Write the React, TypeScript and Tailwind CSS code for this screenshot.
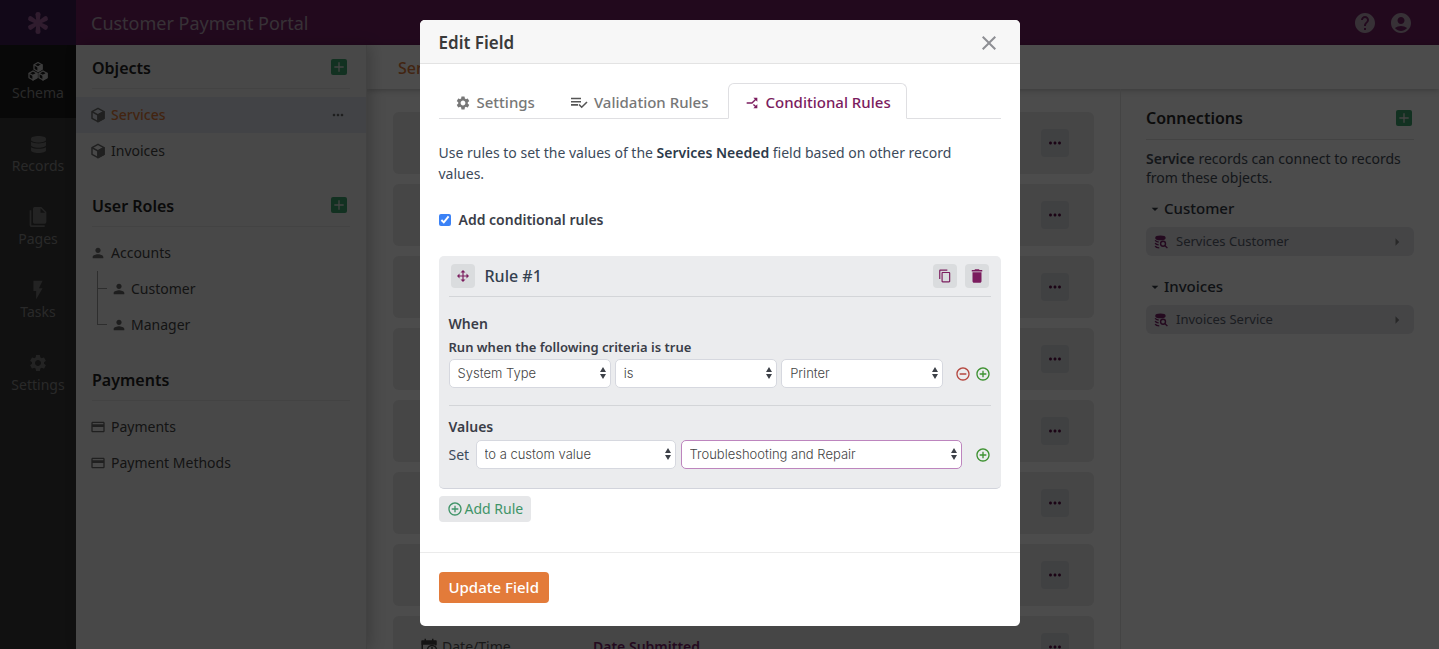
import type { ReactNode } from "react";
import clsx from "clsx";
import { FaDatabase } from "react-icons/fa";
import {
  MdAccountCircle,
  MdAdd,
  MdAddCircleOutline,
  MdArrowDropDown,
  MdArrowRight,
  MdCallSplit,
  MdClose,
  MdContentCopy,
  MdDelete,
  MdFlashOn,
  MdHelp,
  MdMoreHoriz,
  MdOutlineCreditCard,
  MdPerson,
  MdRemoveCircleOutline,
  MdSettings,
} from "react-icons/md";

function LogoIcon() {
  return (
    <svg viewBox="0 0 24 24" className="h-6 w-6" fill="currentColor" aria-hidden="true">
      {["rotate(0 12 12)", "rotate(60 12 12)", "rotate(120 12 12)", "rotate(180 12 12)", "rotate(240 12 12)", "rotate(300 12 12)"].map((t) => (
        <path key={t} transform={t} d="M10.600 13 9.500 3.200Q9.500 1 12 1t2.500 2.200L13.400 13z" />
      ))}
    </svg>
  );
}

function CubeIcon({ className }: { className?: string }) {
  return (
    <svg viewBox="0 0 24 24" className={className} fill="none" stroke="currentColor" strokeWidth="2.2" strokeLinejoin="round" aria-hidden="true">
      <path d="M12 2 21 7v10l-9 5-9-5V7z" />
      <path d="m3 7 9 5 9-5M12 12v10" />
      <path d="m12 12 9-5v10l-9 5z" fill="currentColor" />
    </svg>
  );
}

function CubesIcon() {
  return (
    <svg viewBox="0 0 40 38" className="h-5 w-5" fill="none" stroke="currentColor" strokeWidth="2.6" strokeLinejoin="round" aria-hidden="true">
      {["translate(11 1)", "translate(1 18)", "translate(21 18)"].map((t) => (
        <g key={t} transform={t}>
          <path d="m9 1 8 4.500v9L9 19l-8-4.500v-9z" />
          <path d="m1 5.500 8 4.500 8-4.500" />
          <path d="m9 10 8-4.500v9L9 19z" fill="currentColor" />
        </g>
      ))}
    </svg>
  );
}

function PagesIcon() {
  return (
    <svg viewBox="0 0 24 24" className="h-5 w-5" fill="currentColor" aria-hidden="true">
      <path d="M15,7H20.5L15,1.5V7M8,0H16L22,6V18A2,2 0 0,1 20,20H8C6.89,20 6,19.1 6,18V2A2,2 0 0,1 8,0M4,4V22H20V24H4A2,2 0 0,1 2,22V4H4Z" />
    </svg>
  );
}

function MoveIcon() {
  return (
    <svg viewBox="0 0 24 24" className="h-3.5 w-3.5" fill="currentColor" aria-hidden="true">
      <path d="M13,6V11H18V7.75L22.25,12L18,16.25V13H13V18H16.25L12,22.25L7.75,18H11V13H6V16.25L1.75,12L6,7.75V11H11V6H7.75L12,1.75L16.25,6H13Z" />
    </svg>
  );
}

function ListCheckIcon() {
  return (
    <svg viewBox="0 0 18 14" className="h-3.5 w-[18px] text-[#555]" fill="none" stroke="currentColor" strokeWidth="1.6" aria-hidden="true">
      <path d="M1 2.500h10M1 5.700h10M1 8.900h7M9 8.500l2.700 2.700L17 6" />
    </svg>
  );
}

function DatabaseSearchIcon() {
  return (
    <svg viewBox="0 0 24 24" className="h-3.5 w-3.5 text-[#7b2469]" fill="none" stroke="currentColor" strokeWidth="2.4" aria-hidden="true">
      <ellipse cx="11" cy="5" rx="9" ry="4" fill="currentColor" stroke="none" />
      <path d="M2 9c1 2 3 3 6 3M2 14c1 2 3 3 6 3M2 19c1 2 3 3 7 3" />
      <circle cx="15.500" cy="15" r="4.200" />
      <path d="m18.500 18 4.500 4.500" />
    </svg>
  );
}

function CalendarClockIcon() {
  return (
    <svg viewBox="0 0 24 24" className="h-[18px] w-[18px] text-[#444]" fill="none" stroke="currentColor" strokeWidth="2" aria-hidden="true">
      <path d="M21 10V5H3v16h7" />
      <path d="M3 4h18v4H3zM7 1v4M17 1v4" fill="currentColor" />
      <circle cx="16" cy="16" r="6" />
      <path d="M16 12v4l3 2" />
    </svg>
  );
}

const NAV = [
  { label: "Schema", icon: <CubesIcon />, active: true },
  { label: "Records", icon: <FaDatabase className="h-[17px] w-[17px]" /> },
  { label: "Pages", icon: <PagesIcon /> },
  { label: "Tasks", icon: <MdFlashOn className="h-[22px] w-[22px]" /> },
  { label: "Settings", icon: <MdSettings className="h-5 w-5" /> },
];

const FIELD_ROWS = [1, 2, 3, 4, 5, 6, 7, 8];

function AddButton({ label }: { label: string }) {
  return (
    <button type="button" aria-label={label} className="grid h-4 w-4 place-items-center rounded-xs bg-[#3fa56e] text-[#e0e0e0]">
      <MdAdd className="h-4 w-4" />
    </button>
  );
}

function Section({ title, addable, children }: { title: string; addable?: boolean; children: ReactNode }) {
  return (
    <section className="mb-3.5">
      <div className="mx-4 flex h-11 items-center justify-between border-b border-[#e2e2e2] pr-[3px]">
        <h2 className="pt-0.5 text-base font-semibold text-[#222]">{title}</h2>
        {addable && <AddButton label={`Add ${title}`} />}
      </div>
      <ul className="mt-2">{children}</ul>
    </section>
  );
}

function SideItem({ label, icon, active }: { label: string; icon: ReactNode; active?: boolean }) {
  return (
    <li className={clsx("flex h-9 items-center justify-between pl-3.5 pr-4", active && "bg-[#dce2ea]")}>
      <a href="#" className="flex items-center gap-[5px] text-[#6b6b6b]">
        {icon}
        <span className={active ? "font-medium text-[#dd7a3a]" : "text-[#444]"}>{label}</span>
      </a>
      {active && <MdMoreHoriz className="mr-1 h-4 w-4 text-[#666]" />}
    </li>
  );
}

function RoleChild({ label, last }: { label: string; last?: boolean }) {
  return (
    <li className="flex h-9 pl-[21px]">
      <span className="flex w-[10px] flex-col">
        <span className="h-[18px] border-b border-l border-[#999]" />
        {!last && <span className="h-[18px] border-l border-[#999]" />}
      </span>
      <a href="#" className="ml-1 flex items-center gap-1 text-[#444]">
        <MdPerson className="h-4 w-4 text-[#666]" />
        {label}
      </a>
    </li>
  );
}

function Connection({ title, link }: { title: string; link: string }) {
  return (
    <div className="mb-[17px]">
      <h3 className="flex h-7 items-center text-[15px] font-medium text-[#333a45]">
        <MdArrowDropDown className="h-4 w-[18px]" />
        {title}
      </h3>
      <a href="#" className="mt-1 flex h-[29px] items-center rounded-md bg-[#e6e6ec] px-2 text-[13px] text-[#5a626e]">
        <DatabaseSearchIcon />
        <span className="ml-2">{link}</span>
        <MdArrowRight className="ml-auto h-[18px] w-[18px] text-[#888]" />
      </a>
    </div>
  );
}

function Select({ label, value, className, focused }: { label: string; value: string; className: string; focused?: boolean }) {
  return (
    <div className={clsx("relative", className)}>
      <select
        aria-label={label}
        className={clsx(
          "h-[29px] w-full appearance-none rounded-[5px] border bg-white pl-2 pr-5 font-[Inter,sans-serif] text-[13px] font-light text-[#444] outline-none",
          focused ? "border-[#bd85be]" : "border-[#d6d8df]",
        )}
      >
        <option>{value}</option>
      </select>
      <svg viewBox="0 0 8 12" className="pointer-events-none absolute right-1 top-2 h-3 w-2 text-[#3d4148]" fill="currentColor" aria-hidden="true">
        <path d="M4 0 7 5H1zM4 12 1 7h6z" />
      </svg>
    </div>
  );
}

function Tab({ label, icon, active }: { label: string; icon: ReactNode; active?: boolean }) {
  return (
    <button
      type="button"
      role="tab"
      aria-selected={Boolean(active)}
      className={clsx(
        "-mb-px flex h-9 items-center gap-1.5 border px-[15px] pt-1 font-medium",
        active ? "rounded-t-md border-[#dfdfe2] border-b-white bg-white text-[#7b1c5e]" : "border-transparent text-[#777]",
      )}
    >
      {icon}
      {label}
    </button>
  );
}

function RuleButton({ label, children }: { label: string; children: ReactNode }) {
  return (
    <button type="button" aria-label={label} className="grid h-6 w-6 place-items-center rounded-sm bg-[#dadcde] text-[#7b1c5e]">
      {children}
    </button>
  );
}

function EditFieldModal() {
  return (
    <div className="fixed inset-0 z-20 flex items-start justify-center bg-black/70 pt-5">
      <div role="dialog" aria-modal="true" aria-labelledby="modal-title" className="w-full max-w-[600px] rounded-[5px] bg-white">
        <header className="flex h-11 items-center justify-between rounded-t-[5px] border-b border-[#e3e3e3] bg-[#f7f7f7] px-[19px] pt-0.5">
          <h1 id="modal-title" className="pt-0.5 text-[17px] font-semibold text-[#3a3a3a]">
            Edit Field
          </h1>
          <button type="button" aria-label="Close" className="text-[#8e8f94]">
            <MdClose className="h-6 w-6" />
          </button>
        </header>

        <div className="px-[19px] pb-[30px] pt-[19px]">
          <div role="tablist" className="flex gap-[3px] border-b border-[#dfdfe2] text-[15px]">
            <Tab label="Settings" icon={<MdSettings className="h-4 w-4" />} />
            <Tab label="Validation Rules" icon={<ListCheckIcon />} />
            <Tab label="Conditional Rules" icon={<MdCallSplit className="h-4 w-4 rotate-90" />} active />
          </div>

          <p className="mt-[23px] pr-6 leading-[21px] text-[#3c4a5a]">
            Use rules to set the values of the <strong className="font-semibold text-[#2c3a4a]">Services Needed</strong> field based on other record values.
          </p>

          <label className="mt-6 flex h-6 items-center gap-2 font-semibold text-[#3a3d48]">
            <input type="checkbox" defaultChecked className="h-3 w-3 accent-[#3b82f6]" />
            Add conditional rules
          </label>

          <section className="mt-6 rounded-[5px] border-b border-[#d2d4dc] bg-[#ebecee] px-2.5 pb-[19px]">
            <div className="flex h-[41px] items-center gap-2 border-b border-[#d3d5d8] px-0.5">
              <RuleButton label="Move rule">
                <MoveIcon />
              </RuleButton>
              <h2 className="flex-1 pl-0.5 text-base font-medium text-[#34404f]">Rule #1</h2>
              <RuleButton label="Copy rule">
                <MdContentCopy className="h-3.5 w-3.5" />
              </RuleButton>
              <RuleButton label="Delete rule">
                <MdDelete className="h-[18px] w-[18px]" />
              </RuleButton>
            </div>

            <div className="border-b border-[#d3d5d8] pb-[17px] pt-[15px]">
              <h3 className="h-[23px] text-sm font-semibold leading-[23px] text-[#3a3d48]">When</h3>
              <h4 className="h-6 text-[13px] font-semibold leading-6 text-[#3a3d48]">Run when the following criteria is true</h4>
              <div className="flex items-center">
                <div className="mr-[11px] flex flex-1 gap-1">
                  <Select label="Field" value="System Type" className="flex-1" />
                  <Select label="Operator" value="is" className="flex-1" />
                  <Select label="Value" value="Printer" className="flex-1" />
                </div>
                <button type="button" aria-label="Remove criteria" className="text-[#b5473f]">
                  <MdRemoveCircleOutline className="h-4 w-4" />
                </button>
                <button type="button" aria-label="Add criteria" className="ml-1 text-[#3d9130]">
                  <MdAddCircleOutline className="h-4 w-4" />
                </button>
              </div>
            </div>

            <div className="pt-2">
              <h3 className="h-[26px] text-sm font-semibold leading-[26px] text-[#3a3d48]">Values</h3>
              <div className="flex items-center">
                <span className="w-[27px] text-sm text-[#3c4a5a]">Set</span>
                <Select label="Value type" value="to a custom value" className="w-[200px]" />
                <Select label="Custom value" value="Troubleshooting and Repair" className="ml-[5px] mr-[13px] flex-1" focused />
                <button type="button" aria-label="Add value" className="text-[#3d9130]">
                  <MdAddCircleOutline className="h-4 w-4" />
                </button>
              </div>
            </div>
          </section>

          <button type="button" className="mt-[7px] flex h-[26px] items-center gap-0.5 rounded-sm bg-[#e6e7e9] px-2 text-sm text-[#3f9468]">
            <MdAddCircleOutline className="h-4 w-4" />
            Add Rule
          </button>
        </div>

        <footer className="border-t border-[#ebebeb] px-[19px] pb-[23px] pt-[19px]">
          <button type="button" className="h-[31px] rounded-sm bg-[#e37b3a] px-2.5 text-[15px] font-medium text-white">
            Update Field
          </button>
        </footer>
      </div>
    </div>
  );
}

export default function App() {
  return (
    <div className="flex h-screen overflow-hidden bg-[#fdfdfd] font-['Noto_Sans',sans-serif] text-sm">
      <nav className="w-[76px] shrink-0 bg-[#393939] text-[#777]">
        <div className="grid h-[45px] place-items-center bg-[#3f1d52] text-[#a0609c]">
          <LogoIcon />
        </div>
        {NAV.map((item) => (
          <a
            key={item.label}
            href="#"
            className={clsx("flex h-[73px] flex-col items-center gap-0.5 pt-[15px]", item.active && "bg-[#1b1b1b] text-[#c8c8c8]")}
          >
            <span className="grid h-[22px] place-items-center">{item.icon}</span>
            <span className="leading-[18px] text-[#8a8a8a]">{item.label}</span>
          </a>
        ))}
      </nav>

      <div className="flex min-w-0 flex-1 flex-col">
        <header className="flex h-[45px] shrink-0 items-center bg-[#722063] px-[15px] text-[#b8a6b6]">
          <h1 className="flex-1 text-lg">Customer Payment Portal</h1>
          <a href="#" aria-label="Help">
            <MdHelp className="h-6 w-6" />
          </a>
          <a href="#" aria-label="Account" className="ml-3 mr-[11px]">
            <MdAccountCircle className="h-6 w-6" />
          </a>
        </header>

        <div className="flex min-h-0 flex-1">
          <aside className="z-10 w-[291px] shrink-0 border-r border-[#ddd] bg-[#f2f2f2] shadow-[4px_0_14px_rgba(0,0,0,0.2)]">
            <Section title="Objects" addable>
              <SideItem label="Services" icon={<CubeIcon className="h-4 w-4" />} active />
              <SideItem label="Invoices" icon={<CubeIcon className="h-4 w-4" />} />
            </Section>
            <Section title="User Roles" addable>
              <SideItem label="Accounts" icon={<MdPerson className="h-4 w-4" />} />
              <RoleChild label="Customer" />
              <RoleChild label="Manager" last />
            </Section>
            <Section title="Payments">
              <SideItem label="Payments" icon={<MdOutlineCreditCard className="h-4 w-4" />} />
              <SideItem label="Payment Methods" icon={<MdOutlineCreditCard className="h-4 w-4" />} />
            </Section>
          </aside>

          <main className="flex min-w-0 flex-1 flex-col">
            <div className="flex h-11 shrink-0 items-center bg-white px-[31px] pt-0.5 shadow-[0_1px_6px_rgba(0,0,0,0.25)]">
              <h2 className="text-base font-medium text-[#dd7a3a]">Services</h2>
            </div>
            <div className="flex min-h-0 flex-1">
              <div className="min-w-0 flex-1 overflow-hidden px-[26px] pt-[23px]">
                {FIELD_ROWS.map((row) => (
                  <div key={row} className="mb-2.5 flex h-[62px] items-center rounded-md bg-[#e9e9e9] pl-[27px] pr-[25px]">
                    {row === 8 && (
                      <>
                        <CalendarClockIcon />
                        <span className="ml-1 w-[151px] text-[#555]">Date/Time</span>
                        <span className="font-semibold text-[#7b2469]">Date Submitted</span>
                      </>
                    )}
                    <button type="button" aria-label="Field options" className="ml-auto grid h-7 w-7 place-items-center rounded-sm bg-[#d6dade] text-[#5c1048]">
                      <MdMoreHoriz className="h-[18px] w-[18px]" />
                    </button>
                  </div>
                ))}
              </div>

              <aside className="w-[319px] shrink-0 border-l border-[#e5e5e5] pl-[25px] pr-[25px] pt-2">
                <div className="flex h-[43px] items-center justify-between border-b border-[#e2e2e2] pr-0.5">
                  <h2 className="text-base font-semibold text-[#2b2b2b]">Connections</h2>
                  <AddButton label="Add connection" />
                </div>
                <p className="mb-2 mt-[9px] leading-[19px] text-[#454d59]">
                  <strong className="font-semibold">Service</strong> records can connect to records from these objects.
                </p>
                <Connection title="Customer" link="Services Customer" />
                <Connection title="Invoices" link="Invoices Service" />
              </aside>
            </div>
          </main>
        </div>
      </div>

      <EditFieldModal />
    </div>
  );
}
